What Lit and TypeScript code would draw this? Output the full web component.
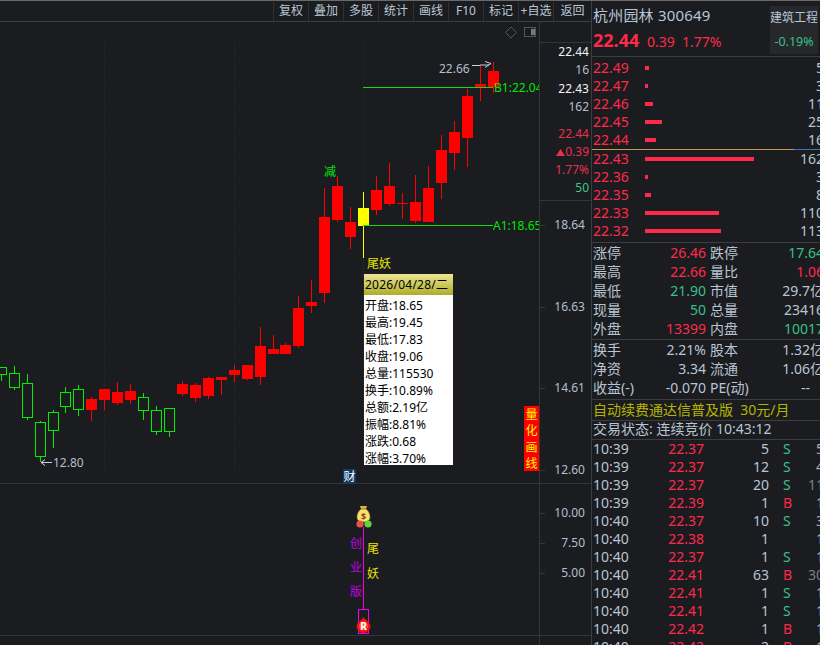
import { LitElement, html, css, svg } from "lit";
import { customElement } from "lit/decorators.js";

const TOOLS = ["复权", "叠加", "多股", "统计", "画线", "F10", "标记", "+自选", "返回"];

// cx, wickTop, bodyTop, bodyBottom, wickBottom, kind
type C = [number, number, number, number, number, "r" | "g" | "y"];
const CANDLES: C[] = [
  [1, 367, 367, 375, 381, "g"],
  [14, 366, 373, 388, 390, "g"],
  [27, 374, 383, 418, 420, "g"],
  [40, 421, 422, 457, 462, "g"],
  [53, 410, 412, 431, 448, "g"],
  [65, 387, 392, 407, 413, "g"],
  [78, 385, 389, 410, 416, "g"],
  [91, 397, 399, 410, 421, "r"],
  [104, 389, 389, 400, 410, "r"],
  [117, 382, 392, 403, 405, "r"],
  [130, 384, 391, 400, 404, "r"],
  [143, 393, 397, 411, 420, "g"],
  [156, 406, 410, 432, 435, "g"],
  [169, 408, 408, 432, 437, "g"],
  [182, 381, 384, 394, 396, "r"],
  [195, 383, 385, 398, 402, "r"],
  [208, 377, 378, 396, 399, "r"],
  [221, 377, 377, 380, 395, "r"],
  [234, 365, 370, 375, 382, "r"],
  [247, 365, 365, 379, 380, "r"],
  [260, 327, 346, 377, 385, "r"],
  [273, 335, 349, 354, 354, "r"],
  [285, 343, 345, 354, 354, "r"],
  [298, 296, 308, 346, 348, "r"],
  [311, 280, 302, 306, 313, "r"],
  [324, 188, 217, 293, 303, "r"],
  [337, 176, 186, 220, 222, "r"],
  [350, 207, 222, 237, 249, "r"],
  [363, 192, 208, 226, 258, "y"],
  [376, 176, 190, 210, 215, "r"],
  [389, 163, 186, 204, 206, "r"],
  [402, 193, 203, 204, 219, "r"],
  [415, 175, 202, 221, 223, "r"],
  [428, 166, 188, 222, 222, "r"],
  [441, 135, 150, 183, 199, "r"],
  [454, 121, 132, 153, 170, "r"],
  [467, 89, 96, 138, 167, "r"],
  [480, 65, 84, 88, 101, "r"],
  [493, 62, 71, 87, 93, "r"],
];

const ASKS: [string, string, number][] = [
  ["22.49", "5", 4], ["22.47", "3", 3], ["22.46", "11", 8], ["22.45", "25", 17], ["22.44", "16", 11],
];
const BIDS: [string, string, number][] = [
  ["22.43", "162", 109], ["22.36", "3", 3], ["22.35", "8", 6], ["22.33", "110", 74], ["22.32", "113", 76],
];

type Stat = [string, string, string, string, string, string];
const STATS: Stat[] = [
  ["涨停", "26.46", "r", "跌停", "17.64", "g"],
  ["最高", "22.66", "r", "量比", "1.06", "r"],
  ["最低", "21.90", "g", "市值", "29.7亿", "n"],
  ["现量", "50", "g", "总量", "23416", "n"],
  ["外盘", "13399", "r", "内盘", "10017", "g"],
];
const STATS2: Stat[] = [
  ["换手", "2.21%", "n", "股本", "1.32亿", "n"],
  ["净资", "3.34", "n", "流通", "1.06亿", "n"],
  ["收益(-)", "-0.070", "n", "PE(动)", "--", "n dash"],
];

const TICKS: [string, string, string, string, string, boolean][] = [
  ["10:39", "22.37", "5", "S", "5", false],
  ["10:39", "22.37", "12", "S", "4", false],
  ["10:39", "22.37", "20", "S", "11", true],
  ["10:39", "22.39", "1", "B", "1", false],
  ["10:40", "22.37", "10", "S", "3", false],
  ["10:40", "22.38", "1", "", "1", false],
  ["10:40", "22.37", "1", "S", "1", false],
  ["10:40", "22.41", "63", "B", "30", true],
  ["10:40", "22.41", "1", "S", "1", false],
  ["10:40", "22.41", "1", "S", "1", false],
  ["10:40", "22.42", "1", "B", "1", false],
  ["10:40", "22.42", "2", "B", "1", false],
];

const TIP = [
  "开盘:18.65", "最高:19.45", "最低:17.83", "收盘:19.06", "总量:115530",
  "换手:10.89%", "总额:2.19亿", "振幅:8.81%", "涨跌:0.68", "涨幅:3.70%",
];

const AXIS: [string, number, number, number, string][] = [
  ["22.44", 589, 52, 0, "w"], ["16", 589, 70, 0, "b"], ["22.43", 589, 89, 0, "w"], ["162", 589, 107, 0, "b"],
  ["22.44", 589, 134, 0, "r"], ["0.39", 589, 152, 0, "r"], ["1.77%", 589, 170, 0, "r"], ["50", 589, 188, 0, "g"],
  ["18.64", 585, 225, 1, "b"], ["16.63", 585, 307, 1, "b"], ["14.61", 585, 388, 1, "b"], ["12.60", 585, 470, 1, "b"],
  ["10.00", 585, 513, 1, "b"], ["7.50", 585, 543, 1, "b"], ["5.00", 585, 573, 1, "b"],
];

@customElement("app-root")
export class AppRoot extends LitElement {
  static styles = css`
    :host {
      display: grid;
      grid-template-columns: 591px 229px;
      width: 820px;
      height: 645px;
      overflow: hidden;
      background: #1b1c20;
      font-family: "Noto Sans", "Noto Sans CJK SC", sans-serif;
      color: #b9c5d2;
      border-top: 1px solid #6a6a6a;
      box-sizing: border-box;
    }
    .left { position: relative; display: flex; flex-direction: column; min-width: 0; }
    .toolbar {
      display: flex;
      justify-content: flex-end;
      border-bottom: 1px solid #3c3d40;
      padding-top: 1px;
      box-sizing: content-box;
      height: 19px;
      flex: none;
    }
    .tool {
      width: 34px;
      border-left: 1px solid #303134;
      font-size: 12px;
      line-height: 18px;
      text-align: center;
      white-space: nowrap;
      overflow: hidden;
      color: #bcc7d4;
    }
    .tool.last { width: 37px; }
    .chart { display: block; flex: none; width: 591px; height: 623px; }
    .chart text {
      font-family: "Noto Sans", "Noto Sans CJK SC", sans-serif;
      font-size: 12px;
      dominant-baseline: central;
      transform: translateY(-1px);
    }
    .wk { fill: #ff0000; }
    .bd-r { fill: #ff0000; }
    .bd-y { fill: #ffff00; }
    .wk-y { fill: #ffff00; }
    .wk-g { fill: #00ee00; }
    .bd-g { fill: #1b1c20; stroke: #00ee00; stroke-width: 1; }
    .grid { stroke: #33353a; stroke-width: 1; fill: none; }
    .dots { stroke: #2c2e33; stroke-width: 1; stroke-dasharray: 1 2; }
    .line-g { stroke: #11dd11; stroke-width: 1; }
    .t-b { fill: #b4bfcc; }
    .t-w { fill: #f0f4f8; }
    .t-r { fill: #e8304a; }
    .t-g { fill: #3ec48e; }
    .t-lg { fill: #00e600; }
    .t-y { fill: #e8e800; }
    .t-m { fill: #c000e8; }
    .t-wh { fill: #ffffff; }
    .chart text.bag { font-size: 9px; font-weight: 700; fill: #8a3a30; transform: none; }
    .chart text.rr { font-size: 10px; font-weight: 700; fill: #ffffff; transform: none; }
    .tri { fill: #f0304a; }
    .arr { stroke: #c8d0dc; stroke-width: 1; fill: none; }
    .ico { stroke: #55575b; stroke-width: 1; fill: none; }
    .icof { fill: #77797d; }
    .cai { fill: #0d3a68; }
    .mag { stroke: #ee00ee; stroke-width: 1; fill: none; }
    .bagtop { fill: #e8b23c; }
    .bagbody { fill: #f4e46a; stroke: #7a5a20; stroke-width: 0.7; }
    .ball-r { fill: #e8524a; }
    .ball-g { fill: #62d23c; }
    .drop { fill: #f01010; }
    .dropc { fill: #ff4a3a; }

    .tip {
      position: absolute;
      left: 364px;
      top: 273px;
      width: 89px;
      height: 191px;
      background: #fff;
      color: #000;
      font-size: 12px;
    }
    .tip-h {
      height: 21px;
      line-height: 21px;
      padding-left: 1px;
      letter-spacing: 0.25px;
      white-space: nowrap;
      background: linear-gradient(#ece592, #adad2a);
    }
    .tip-r { height: 17px; line-height: 17px; padding-left: 1px; white-space: nowrap; }
    .tip-list { padding-top: 2px; }

    .liang {
      position: absolute;
      left: 524px;
      top: 405px;
      width: 15px;
      height: 65px;
      background: #ff0000;
      color: #ffff00;
      font-size: 12px;
      display: grid;
      justify-items: center;
      align-items: center;
      grid-auto-rows: 16.25px;
    }

    .right { width: 232px; border-left: 1px solid #3c3d40; box-sizing: content-box; }
    .head { height: 55px; position: relative; display: flex; border-bottom: 1px solid #3c3d40; padding-left: 1px; }
    .head-l { flex: 1; }
    .name { font-size: 15px; line-height: 20px; padding-top: 4px; white-space: nowrap; letter-spacing: 0.2px; }
    .pr { display: flex; align-items: baseline; white-space: nowrap; color: #ff2a4a; font-size: 14px; line-height: 24px; margin-top: 3px; }
    .pr b { font-size: 18px; width: 54px; font-weight: 700; }
    .pr .a { width: 35px; }
    .sector {
      position: absolute;
      left: 178px;
      top: 5px;
      width: 48px;
      height: 48px;
      background: #26282c;
      font-size: 12px;
      text-align: center;
      white-space: nowrap;
    }
    .sector .n { line-height: 24px; }
    .sector .v { color: #38c088; font-size: 12.5px; line-height: 24px; }

    .book { padding: 2px 0 0; }
    .book.b2 { padding: 0 0 2px; }
    .row { display: grid; grid-template-columns: 52px 1fr 30px; align-items: center; height: 18px; padding-left: 1px; font-size: 14px; line-height: 18px; }
    .row .p { color: #ff2a4a; }
    .row .q { text-align: right; }
    .bar { height: 4px; background: #ff2a4a; }
    .mid { height: 1px; background: linear-gradient(90deg, #c49a4c 202px, #3c78b4 202px); }
    .sep { height: 1px; background: #3c3d40; }

    .stats { padding-left: 1px; }
    .st { display: grid; grid-template-columns: 48px 65px 4px 42px 1fr; height: 19px; line-height: 19px; font-size: 14px; white-space: nowrap; }
    .st .val { text-align: right; }
    .st .val.dash { padding-right: 14px; }
    .st .lab2 { grid-column: 4; }
    .r { color: #ff2a4a; }
    .g { color: #38c088; }
    .n { color: #b9c5d2; }
    .pad1 { padding-bottom: 1px; }
    .pad2 { padding-bottom: 2px; }
    .ad { height: 20px; line-height: 20px; font-size: 14px; color: #b5b500; padding-left: 1px; white-space: pre; }
    .status { height: 18px; line-height: 16px; font-size: 14px; padding-left: 1px; white-space: nowrap; }
    .ticks { padding-left: 1px; }
    .tk { display: grid; grid-template-columns: 42px 69px 65px 14px 10px 1fr; height: 18px; line-height: 18px; font-size: 14px; }
    .tk .pc { text-align: right; color: #ff2a4a; }
    .tk .vo { text-align: right; }
    .tk .x { text-align: right; color: #a5adb6; }
    .tk .x.dim { color: #7a7d82; }
    .tk .ty { color: #38c088; }
    .tk .ty.B { color: #ff2a4a; }
  `;

  private candles() {
    return CANDLES.map(([x, wt, bt, bb, wb, k]) => {
      const wk = k === "g" ? "wk-g" : k === "y" ? "wk-y" : "wk";
      const w = svg`<rect class=${wk} x=${x} y=${wt} width="1" height=${wb - wt}></rect>`;
      if (k === "g") {
        return svg`${w}<rect class="bd-g" x=${x - 4.5} y=${bt + 0.5} width="10" height=${bb - bt - 1}></rect>`;
      }
      return svg`${w}<rect class=${k === "y" ? "bd-y" : "bd-r"} x=${x - 5} y=${bt} width="11" height=${bb - bt}></rect>`;
    });
  }

  private axis() {
    return AXIS.map(([t, x, y, tick, c]) => svg`
      ${tick ? svg`<line class="grid" x1="539" x2="545" y1=${y + 0.5} y2=${y + 0.5}></line>` : ""}
      <text class="t-${c}" x=${x} y=${y} text-anchor="end">${t}</text>`);
  }

  private chart() {
    return html`<svg class="chart" viewBox="0 22 591 623" shape-rendering="crispEdges">
      <defs><clipPath id="cp"><rect x="0" y="21" width="539" height="620"></rect></clipPath></defs>
      <line class="dots" x1="104.5" x2="104.5" y1="43" y2="470"></line>
      <line class="dots" x1="234.5" x2="234.5" y1="43" y2="470"></line>
      <line class="dots" x1="363.5" x2="363.5" y1="43" y2="470"></line>
      <line class="grid" x1="539.5" x2="539.5" y1="21" y2="645"></line>
      <line class="grid" x1="539" x2="591" y1="42.5" y2="42.5"></line>
      <line class="grid" x1="539" x2="591" y1="200.5" y2="200.5"></line>
      <line class="grid" x1="0" x2="591" y1="483.5" y2="483.5"></line>
      <line class="grid" x1="0" x2="591" y1="635.5" y2="635.5"></line>
      <g>${this.candles()}</g>
      <line class="line-g" x1="363" x2="493" y1="87.5" y2="87.5"></line>
      <line class="line-g" x1="363" x2="493" y1="225.5" y2="225.5"></line>
      <g clip-path="url(#cp)">
        <text class="t-lg" x="494" y="88">B1:22.04</text>
        <text class="t-lg" x="493" y="226">A1:18.65</text>
      </g>
      <text class="t-b" x="439" y="69">22.66</text>
      <path class="arr" shape-rendering="auto" d="M472 65.5H480M480 65H489M485 61.500L491 63.500L485 67.500"></path>
      <text class="t-b" x="53" y="463">12.80</text>
      <path class="arr" shape-rendering="auto" d="M41 462.500H52M45 459.500L41 462.500L45 465.500"></path>
      <text class="t-lg" x="324" y="172">减</text>
      <text class="t-y" x="367" y="264">尾妖</text>
      <rect class="cai" x="343" y="469" width="13" height="14"></rect>
      <text class="t-wh" x="343.5" y="477">财</text>
      <path class="ico" shape-rendering="auto" d="M511 27L516.500 32.500L511 38L505.500 32.500Z"></path>
      <rect class="ico" x="524.5" y="27.5" width="11" height="9" rx="1"></rect>
      <rect class="icof" x="531" y="29" width="4" height="6"></rect>
      <g>${this.axis()}</g>
      <path class="tri" shape-rendering="auto" d="M556 156L560.500 149L565 156Z"></path>

      <g shape-rendering="auto">
        <path class="bagtop" d="M360 506h7l-1 3h-5z"></path>
        <path class="bagbody" d="M361 509h5c3 2 4.500 6 4 9c-.5 3-3 4-6.500 4s-6-1-6.500-4c-.5-3 1-7 4-9z"></path>
        <text class="bag" x="363.5" y="516" text-anchor="middle">$</text>
        <circle class="ball-r" cx="360" cy="524" r="3.6"></circle>
        <circle class="ball-g" cx="368" cy="524" r="3.6"></circle>
      </g>
      <line class="mag" x1="363.5" x2="363.5" y1="527" y2="609"></line>
      <text class="t-m" x="350" y="544">创</text>
      <text class="t-m" x="350" y="568">业</text>
      <text class="t-m" x="350" y="592">版</text>
      <text class="t-y" x="367" y="549">尾</text>
      <text class="t-y" x="367" y="574">妖</text>
      <rect class="mag" x="358.5" y="609.5" width="10" height="24"></rect>
      <g shape-rendering="auto">
        <path class="drop" d="M363.5 617c2 3.500 7 5 7 9.500a7 6.500 0 0 1-14 0c0-4.500 5-6 7-9.500z"></path>
        <circle class="dropc" cx="363.5" cy="626" r="4.5"></circle>
        <text class="rr" x="363.5" y="626" text-anchor="middle">R</text>
      </g>
    </svg>`;
  }

  private bookRow([p, q, w]: [string, string, number]) {
    return html`<div class="row"><span class="p">${p}</span><span><div class="bar" style="width:${w}px"></div></span><span class="q">${q}</span></div>`;
  }

  private statRow([a, b, c, d, e, f]: Stat) {
    return html`<div class="st"><span>${a}</span><span class="val ${c}">${b}</span><span></span><span class="lab2">${d}</span><span class="val ${f}">${e}</span></div>`;
  }

  render() {
    return html`
      <div class="left">
        <div class="toolbar">
          ${TOOLS.map((t, i) => html`<div class="tool ${i === TOOLS.length - 1 ? "last" : ""}">${t}</div>`)}
        </div>
        ${this.chart()}
        <div class="tip">
          <div class="tip-h">2026/04/28/二</div>
          <div class="tip-list">${TIP.map((t) => html`<div class="tip-r">${t}</div>`)}</div>
        </div>
        <div class="liang"><span>量</span><span>化</span><span>画</span><span>线</span></div>
      </div>
      <div class="right">
        <div class="head">
          <div class="head-l">
            <div class="name">杭州园林 300649</div>
            <div class="pr"><b>22.44</b><span class="a">0.39</span><span>1.77%</span></div>
          </div>
          <div class="sector"><div class="n">建筑工程</div><div class="v">-0.19%</div></div>
        </div>
        <div class="book">${ASKS.map((r) => this.bookRow(r))}</div>
        <div class="mid"></div>
        <div class="book b2">${BIDS.map((r) => this.bookRow(r))}</div>
        <div class="sep"></div>
        <div class="stats pad1">${STATS.map((r) => this.statRow(r))}</div>
        <div class="sep"></div>
        <div class="stats pad2">${STATS2.map((r) => this.statRow(r))}</div>
        <div class="sep"></div>
        <div class="ad">自动续费通达信普及版  30元/月</div>
        <div class="sep"></div>
        <div class="status">交易状态: 连续竞价 10:43:12</div>
        <div class="sep"></div>
        <div class="ticks">
          ${TICKS.map(([t, p, v, ty, x, dim]) => html`<div class="tk">
            <span>${t}</span><span class="pc">${p}</span><span class="vo">${v}</span>
            <span></span><span class="ty ${ty}">${ty}</span><span class="x ${dim ? "dim" : ""}">${x}</span>
          </div>`)}
        </div>
      </div>
    `;
  }
}
